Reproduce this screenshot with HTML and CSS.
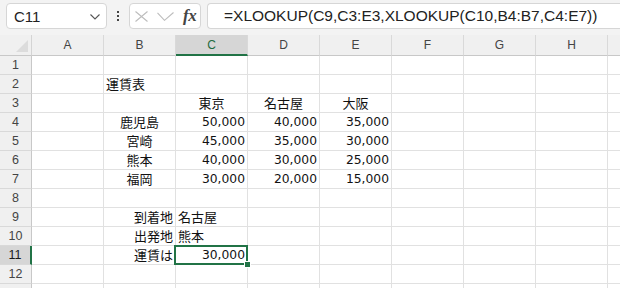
FILE: index.html
```html
<!DOCTYPE html>
<html lang="ja">
<head>
<meta charset="utf-8">
<title>運賃表</title>
<link rel="stylesheet" href="styles.css">
</head>
<body>
<div class="app">
  <div class="toolbar">
    <div class="namebox">
      <span class="name">C11</span>
      <svg class="chev" width="10" height="6" viewBox="0 0 10 6"><path d="M0.5 0.5 L5 5 L9.5 0.5" fill="none" stroke="#555" stroke-width="1.1"/></svg>
    </div>
    <div class="dots"><i></i><i></i><i></i></div>
    <div class="fxbox">
      <svg class="ico" width="13" height="11" viewBox="0 0 13 11"><path d="M0.5 0.5 L12.5 10.5 M12.5 0.5 L0.5 10.5" stroke="#bdbdbd" stroke-width="1.1" fill="none"/></svg>
      <svg class="ico" width="17" height="9" viewBox="0 0 17 9"><path d="M0.5 0.8 L7.5 8.3 L16.5 0.5" stroke="#bdbdbd" stroke-width="1.1" fill="none"/></svg>
      <span class="fx">fx</span>
    </div>
    <div class="formula">=XLOOKUP(C9,C3:E3,XLOOKUP(C10,B4:B7,C4:E7))</div>
  </div>
  <div class="sheet">
    <div class="corner"></div><div class="ch">A</div><div class="ch">B</div><div class="ch sel">C</div><div class="ch">D</div><div class="ch">E</div><div class="ch">F</div><div class="ch">G</div><div class="ch">H</div><div class="ch"></div>

    <div class="rh">1</div><div class="c"></div><div class="c"></div><div class="c"></div><div class="c"></div><div class="c"></div><div class="c"></div><div class="c"></div><div class="c"></div><div class="c"></div>

    <div class="rh">2</div><div class="c"></div><div class="c l">運賃表</div><div class="c"></div><div class="c"></div><div class="c"></div><div class="c"></div><div class="c"></div><div class="c"></div><div class="c"></div>

    <div class="rh">3</div><div class="c"></div><div class="c"></div><div class="c m">東京</div><div class="c m">名古屋</div><div class="c m">大阪</div><div class="c"></div><div class="c"></div><div class="c"></div><div class="c"></div>

    <div class="rh">4</div><div class="c"></div><div class="c m">鹿児島</div><div class="c r num">50,000</div><div class="c r num">40,000</div><div class="c r num">35,000</div><div class="c"></div><div class="c"></div><div class="c"></div><div class="c"></div>

    <div class="rh">5</div><div class="c"></div><div class="c m">宮崎</div><div class="c r num">45,000</div><div class="c r num">35,000</div><div class="c r num">30,000</div><div class="c"></div><div class="c"></div><div class="c"></div><div class="c"></div>

    <div class="rh">6</div><div class="c"></div><div class="c m">熊本</div><div class="c r num">40,000</div><div class="c r num">30,000</div><div class="c r num">25,000</div><div class="c"></div><div class="c"></div><div class="c"></div><div class="c"></div>

    <div class="rh">7</div><div class="c"></div><div class="c m">福岡</div><div class="c r num">30,000</div><div class="c r num">20,000</div><div class="c r num">15,000</div><div class="c"></div><div class="c"></div><div class="c"></div><div class="c"></div>

    <div class="rh">8</div><div class="c"></div><div class="c"></div><div class="c"></div><div class="c"></div><div class="c"></div><div class="c"></div><div class="c"></div><div class="c"></div><div class="c"></div>

    <div class="rh">9</div><div class="c"></div><div class="c r">到着地</div><div class="c l">名古屋</div><div class="c"></div><div class="c"></div><div class="c"></div><div class="c"></div><div class="c"></div><div class="c"></div>

    <div class="rh">10</div><div class="c"></div><div class="c r">出発地</div><div class="c l">熊本</div><div class="c"></div><div class="c"></div><div class="c"></div><div class="c"></div><div class="c"></div><div class="c"></div>

    <div class="rh rsel">11</div><div class="c"></div><div class="c r">運賃は</div><div class="c r num active">30,000<span class="handle"></span></div><div class="c"></div><div class="c"></div><div class="c"></div><div class="c"></div><div class="c"></div><div class="c"></div>

    <div class="rh">12</div><div class="c"></div><div class="c"></div><div class="c"></div><div class="c"></div><div class="c"></div><div class="c"></div><div class="c"></div><div class="c"></div><div class="c"></div>

    <div class="rh"></div><div class="c"></div><div class="c"></div><div class="c"></div><div class="c"></div><div class="c"></div><div class="c"></div><div class="c"></div><div class="c"></div><div class="c"></div>
  </div>
</div>
</body>
</html>
```
FILE: styles.css
```css
html, body {
  margin: 0;
  padding: 0;
  background: #ffffff;
}
.app {
  width: 620px;
  height: 288px;
  overflow: hidden;
  background: #f3f3f3;
}
.toolbar {
  height: 35px;
  display: flex;
  align-items: flex-start;
  padding: 3px 0 0 6px;
  box-sizing: border-box;
  background: #f3f3f3;
}
.namebox {
  width: 101px;
  height: 26px;
  box-sizing: border-box;
  background: #fff;
  border: 1px solid #d6d6d6;
  border-radius: 4px;
  display: flex;
  align-items: center;
  justify-content: space-between;
  padding: 0 6px 0 6px;
  font-family: "Liberation Sans", Arial, sans-serif;
  font-size: 15px;
  color: #222;
}
.name { padding-left: 1px; }
.chev { margin-top: 2px; }
.dots {
  width: 22px;
  height: 26px;
  display: flex;
  flex-direction: column;
  align-items: center;
  justify-content: center;
  gap: 2px;
}
.dots i {
  display: block;
  width: 2px;
  height: 2px;
  background: #444;
}
.fxbox {
  width: 72px;
  height: 26px;
  box-sizing: border-box;
  background: #fff;
  border: 1px solid #d6d6d6;
  border-radius: 4px;
  display: flex;
  align-items: center;
  padding: 0 0 0 5px;
  gap: 9px;
}
.fx {
  font-family: "Liberation Serif", "Times New Roman", serif;
  font-style: italic;
  font-weight: bold;
  font-size: 17px;
  color: #444;
  margin-left: 0;
  letter-spacing: -0.5px;
}
.formula {
  flex: 1;
  margin-left: 6px;
  height: 26px;
  box-sizing: border-box;
  background: #fff;
  border: 1px solid #d6d6d6;
  border-right: none;
  border-radius: 4px 0 0 4px;
  padding-left: 16px;
  font-family: "Liberation Sans", Arial, sans-serif;
  font-size: 15.5px;
  line-height: 24px;
  color: #222;
  white-space: nowrap;
  overflow: hidden;
}
.sheet {
  display: grid;
  grid-template-columns: 32px repeat(9, 72px);
  grid-template-rows: 21px repeat(13, 19px);
  background: #fff;
}
.sheet > div {
  box-sizing: border-box;
  border-right: 1px solid #e1e1e1;
  border-bottom: 1px solid #e1e1e1;
  white-space: nowrap;
  overflow: visible;
}
.corner {
  background: #f0f0f0;
  position: relative;
  border-right-color: #d4d4d4 !important;
  border-bottom-color: #c8c8c8 !important;
}
.corner::after {
  content: "";
  position: absolute;
  right: 3px;
  bottom: 3px;
  width: 0;
  height: 0;
  border-left: 12px solid transparent;
  border-bottom: 12px solid #dcdcdc;
}
.ch {
  background: #f0f0f0;
  border-right-color: #d9d9d9 !important;
  border-bottom-color: #c8c8c8 !important;
  font-family: "Liberation Sans", Arial, sans-serif;
  font-size: 12px;
  color: #444;
  text-align: center;
  line-height: 21px;
}
.ch.sel {
  background: #d6d6d6;
  color: #1e6b40;
  border-bottom: 2px solid #217346 !important;
}
.rh {
  background: #f0f0f0;
  border-right-color: #c8c8c8 !important;
  border-bottom-color: #d9d9d9 !important;
  font-family: "Liberation Sans", Arial, sans-serif;
  font-size: 12.5px;
  color: #444;
  text-align: center;
  line-height: 19px;
}
.rh.rsel {
  background: #d6d6d6;
  color: #1a1a1a;
  border-right: 2px solid #217346 !important;
}
.c {
  font-family: "Noto Sans CJK JP", sans-serif;
  font-size: 13px;
  line-height: 18px;
  color: #111;
}
.l { text-align: left; padding-left: 2px; }
.m { text-align: center; }
.r { text-align: right; padding-right: 2px; }
.num {
  font-family: "DejaVu Sans", sans-serif;
  font-size: 12.3px;
}
.active {
  position: relative;
}
.active::after {
  content: "";
  position: absolute;
  left: -2px;
  top: -1px;
  right: -1px;
  bottom: -1px;
  border: 2px solid #217346;
  z-index: 2;
}
.handle {
  position: absolute;
  right: -3px;
  bottom: -3px;
  width: 5px;
  height: 5px;
  background: #217346;
  outline: 1px solid #fff;
  z-index: 3;
}
```
